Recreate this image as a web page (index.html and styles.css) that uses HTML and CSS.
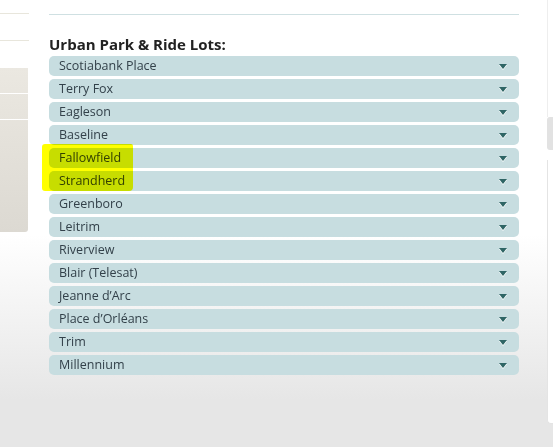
FILE: index.html
```html
<!DOCTYPE html>
<html lang="en">
<head>
  <meta charset="UTF-8">
  <title>Urban Park &amp; Ride Lots</title>
  <meta name="viewport" content="width=device-width, initial-scale=1.0">
  <link rel="stylesheet" href="styles.css">
</head>
<body>
  <div class="page">
    <div class="side">
      <div class="side-rule first"></div>
      <div class="side-rule"></div>
      <div class="side-box">
        <div class="side-item"></div>
        <div class="side-item"></div>
        <div class="side-item last"></div>
      </div>
    </div>

    <div class="main">
      <h2>Urban Park &amp; Ride Lots:</h2>
      <ul class="lots">
        <li>Scotiabank Place</li>
        <li>Terry Fox</li>
        <li>Eagleson</li>
        <li>Baseline</li>
        <li>Fallowfield</li>
        <li>Strandherd</li>
        <li>Greenboro</li>
        <li>Leitrim</li>
        <li>Riverview</li>
        <li>Blair (Telesat)</li>
        <li>Jeanne d’Arc</li>
        <li>Place d’Orléans</li>
        <li>Trim</li>
        <li>Millennium</li>
      </ul>
    </div>

    <div class="edge">
      <div class="edge-top"></div>
      <div class="edge-tab"></div>
      <div class="edge-panel"></div>
    </div>
  </div>

  <div class="marker"></div>
</body>
</html>
```

FILE: styles.css
```css
html, body { margin: 0; height: 100%; }
body { font-family: "Open Sans", "DejaVu Sans", sans-serif; background: linear-gradient(#fff 0, #fff 235px, #e6e6e6 400px, #e6e6e6 100%); color: #333; }
.page { display: flex; height: 447px; }

.side { width: 29px; flex: none; }
.side-rule { height: 1px; background: #e8e6dc; margin-top: 26px; }
.side-rule.first { margin-top: 13px; }
.side-box { margin-top: 27px; width: 28px; height: 164px; border-bottom-right-radius: 3px; background: linear-gradient(#ebe8e1, #dcd9d2); display: flex; flex-direction: column; }
.side-item { height: 25px; border-bottom: 1px solid #fff; }
.side-item.last { border-bottom: 0; flex: 1; }

.main { width: 470px; margin-left: 20px; flex: none; border-top: 1px solid #cfe0e2; margin-top: 14px; }
.main h2 { margin: 21px 0 3px; font-size: 15px; line-height: 17px; font-weight: bold; color: #222; }
.lots { list-style: none; margin: 0; padding: 0; }
.lots li { position: relative; height: 20px; line-height: 20px; margin-bottom: 3px; padding-left: 10px; font-size: 12.5px; color: #33414a; background: #c7dde0; border-radius: 5px; }
.lots li::after { content: ""; position: absolute; right: 12px; top: 8px; border-left: 4.5px solid transparent; border-right: 4.5px solid transparent; border-top: 5px solid #2f6565; filter: drop-shadow(0 1px 0 #fff); }

.edge { margin-left: auto; width: 6px; flex: none; display: flex; flex-direction: column; }
.edge-top { height: 117px; background: #fff; border-left: 1px solid #eee; }
.edge-tab { height: 33px; background: #e2e2e2; border-radius: 3px 0 0 3px; }
.edge-panel { margin-top: 10px; height: 263px; background: #fff; border-left: 1px solid #e4e4e4; border-bottom: 1px solid #e4e4e4; border-bottom-left-radius: 4px; }

.marker { position: absolute; left: 42px; top: 144px; width: 91px; height: 47px; background: #ffff00; mix-blend-mode: multiply; border-radius: 3px 2px 4px 3px; }
```
